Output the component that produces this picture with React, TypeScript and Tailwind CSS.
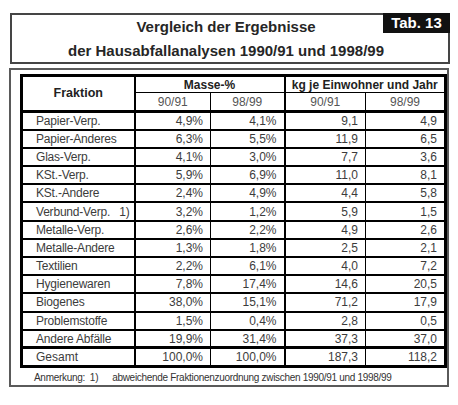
import React from "react";

type Row = { name: string; note?: string; m1: string; m2: string; k1: string; k2: string };

const rows: Row[] = [
  { name: "Papier-Verp.", m1: "4,9%", m2: "4,1%", k1: "9,1", k2: "4,9" },
  { name: "Papier-Anderes", m1: "6,3%", m2: "5,5%", k1: "11,9", k2: "6,5" },
  { name: "Glas-Verp.", m1: "4,1%", m2: "3,0%", k1: "7,7", k2: "3,6" },
  { name: "KSt.-Verp.", m1: "5,9%", m2: "6,9%", k1: "11,0", k2: "8,1" },
  { name: "KSt.-Andere", m1: "2,4%", m2: "4,9%", k1: "4,4", k2: "5,8" },
  { name: "Verbund-Verp.", note: "1)", m1: "3,2%", m2: "1,2%", k1: "5,9", k2: "1,5" },
  { name: "Metalle-Verp.", m1: "2,6%", m2: "2,2%", k1: "4,9", k2: "2,6" },
  { name: "Metalle-Andere", m1: "1,3%", m2: "1,8%", k1: "2,5", k2: "2,1" },
  { name: "Textilien", m1: "2,2%", m2: "6,1%", k1: "4,0", k2: "7,2" },
  { name: "Hygienewaren", m1: "7,8%", m2: "17,4%", k1: "14,6", k2: "20,5" },
  { name: "Biogenes", m1: "38,0%", m2: "15,1%", k1: "71,2", k2: "17,9" },
  { name: "Problemstoffe", m1: "1,5%", m2: "0,4%", k1: "2,8", k2: "0,5" },
  { name: "Andere Abfälle", m1: "19,9%", m2: "31,4%", k1: "37,3", k2: "37,0" },
];

const total: Row = { name: "Gesamt", m1: "100,0%", m2: "100,0%", k1: "187,3", k2: "118,2" };

const num = "text-right pr-[7px] border-black";

export default function App() {
  return (
    <div className="w-[458px] h-[405px] bg-white pt-[13px] pl-[9px] font-['Liberation_Sans',Arial,sans-serif] text-[#3c3c3c]">
      {/* title */}
      <div className="relative ml-[1px] w-[440px] h-[51px] border-2 border-[#454545] flex flex-col items-center text-[#262626] font-bold text-[15px] leading-[24px]">
        <div className="pr-[8px]">Vergleich der Ergebnisse</div>
        <div className="pr-[8px]">der Hausabfallanalysen 1990/91 und 1998/99</div>
        <div className="absolute -top-[2px] -right-[2px] w-[67px] h-[20px] bg-[#111] text-white text-[15px] leading-[20px] text-center">
          Tab. 13
        </div>
      </div>

      {/* table box */}
      <div className="mt-[4px] w-[440px] h-[319px] border-2 border-[#5a5a5a] pl-[9px] pt-[4px]">
        <table className="w-[424px] table-fixed border-collapse border-[3px] border-black text-[12px] leading-none">
          <colgroup>
            <col className="w-[113px]" />
            <col className="w-[76px]" />
            <col className="w-[74px]" />
            <col className="w-[81px]" />
            <col className="w-[80px]" />
          </colgroup>
          <thead>
            <tr className="h-[17px]">
              <th rowSpan={2} className="border-r-2 border-b-[3px] border-black text-[#222] font-bold text-[12.5px]">
                Fraktion
              </th>
              <th colSpan={2} className="border-r-2 border-b border-black text-[#222] font-bold">
                Masse-%
              </th>
              <th colSpan={2} className="border-b border-black text-[#222] font-bold">
                kg je Einwohner und Jahr
              </th>
            </tr>
            <tr className="h-[19px] font-normal text-[#555]">
              <td className="text-center border-r border-b-[3px] border-black">90/91</td>
              <td className="text-center border-r-2 border-b-[3px] border-black">98/99</td>
              <td className="text-center border-r border-b-[3px] border-black">90/91</td>
              <td className="text-center border-b-[3px] border-black">98/99</td>
            </tr>
          </thead>
          <tbody>
            {rows.map((r) => (
              <tr key={r.name} className="h-[18.2px]">
                <td className="pl-[13px] border-r-2 border-b-2 border-black">
                  <div className="flex justify-between pr-[4px] tracking-[-0.2px]">
                    <span>{r.name}</span>
                    {r.note && <span>{r.note}</span>}
                  </div>
                </td>
                <td className={`${num} border-r border-b-2`}>{r.m1}</td>
                <td className={`${num} border-r-2 border-b-2`}>{r.m2}</td>
                <td className={`${num} border-r border-b-2`}>{r.k1}</td>
                <td className={`${num} border-b-2`}>{r.k2}</td>
              </tr>
            ))}
            <tr className="h-[18.2px] border-t-[3px] border-black">
              <td className="pl-[13px] border-r-2 border-black">{total.name}</td>
              <td className={`${num} border-r`}>{total.m1}</td>
              <td className={`${num} border-r-2`}>{total.m2}</td>
              <td className={`${num} border-r`}>{total.k1}</td>
              <td className={num}>{total.k2}</td>
            </tr>
          </tbody>
        </table>
        <div className="mt-[2px] pl-[14px] text-[10px] tracking-[-0.3px] text-[#333] flex">
          <span>Anmerkung:&nbsp; 1)</span>
          <span className="ml-[14px]">abweichende Fraktionenzuordnung zwischen 1990/91 und 1998/99</span>
        </div>
      </div>
    </div>
  );
}
